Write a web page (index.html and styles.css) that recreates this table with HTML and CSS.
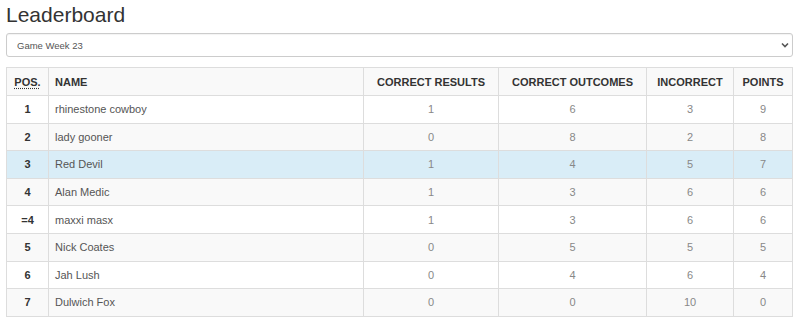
FILE: index.html
```html
<!DOCTYPE html>
<html>
<head>
<meta charset="utf-8">
<link rel="stylesheet" href="styles.css">
</head>
<body>
<div class="page">
  <h1 class="title">Leaderboard</h1>
  <div class="select-wrap">
    <select class="week-select">
      <option>Game Week 23</option>
    </select>
    <svg class="chevron" width="8" height="6" viewBox="0 0 8 6"><path d="M1 1.5 L4 4.5 L7 1.5" fill="none" stroke="#555" stroke-width="1.6"/></svg>
  </div>
  <table class="board">
    <colgroup>
      <col class="c-pos"><col class="c-name"><col class="c-cr"><col class="c-co"><col class="c-inc"><col class="c-pts">
    </colgroup>
    <thead>
      <tr>
        <th class="center"><abbr title="Position">POS.</abbr></th>
        <th class="left">NAME</th>
        <th class="center">CORRECT RESULTS</th>
        <th class="center">CORRECT OUTCOMES</th>
        <th class="center">INCORRECT</th>
        <th class="center">POINTS</th>
      </tr>
    </thead>
    <tbody>
      <tr><td class="pos">1</td><td class="name">rhinestone cowboy</td><td class="num">1</td><td class="num">6</td><td class="num">3</td><td class="num">9</td></tr>
      <tr class="alt"><td class="pos">2</td><td class="name">lady gooner</td><td class="num">0</td><td class="num">8</td><td class="num">2</td><td class="num">8</td></tr>
      <tr class="info"><td class="pos">3</td><td class="name">Red Devil</td><td class="num">1</td><td class="num">4</td><td class="num">5</td><td class="num">7</td></tr>
      <tr class="alt"><td class="pos">4</td><td class="name">Alan Medic</td><td class="num">1</td><td class="num">3</td><td class="num">6</td><td class="num">6</td></tr>
      <tr><td class="pos">=4</td><td class="name">maxxi masx</td><td class="num">1</td><td class="num">3</td><td class="num">6</td><td class="num">6</td></tr>
      <tr class="alt"><td class="pos">5</td><td class="name">Nick Coates</td><td class="num">0</td><td class="num">5</td><td class="num">5</td><td class="num">5</td></tr>
      <tr><td class="pos">6</td><td class="name">Jah Lush</td><td class="num">0</td><td class="num">4</td><td class="num">6</td><td class="num">4</td></tr>
      <tr class="alt"><td class="pos">7</td><td class="name">Dulwich Fox</td><td class="num">0</td><td class="num">0</td><td class="num">10</td><td class="num">0</td></tr>
    </tbody>
  </table>
</div>
</body>
</html>
```
FILE: styles.css
```css
html, body {
  margin: 0;
  padding: 0;
  background: #fff;
}
body {
  font-family: "Liberation Sans", Arial, sans-serif;
  color: #333;
}
.page {
  padding: 0 7px 0 6px;
}
.title {
  margin: 3px 0 0 0;
  font-size: 21px;
  line-height: 24px;
  font-weight: normal;
  color: #333;
}
.select-wrap {
  position: relative;
  margin-top: 6px;
}
.week-select {
  display: block;
  width: 100%;
  height: 24px;
  box-sizing: border-box;
  -webkit-appearance: none;
  appearance: none;
  border: 1px solid #ccc;
  border-radius: 3px;
  background: #fff;
  font-family: "Liberation Sans", Arial, sans-serif;
  font-size: 9.5px;
  color: #555;
  padding: 0 10px;
  box-shadow: inset 0 1px 1px rgba(0,0,0,0.05);
}
.chevron {
  position: absolute;
  right: 4px;
  top: 9px;
}
.board {
  margin-top: 10px;
  width: 100%;
  border-collapse: collapse;
  table-layout: fixed;
  font-size: 11px;
}
.c-pos { width: 42px; }
.c-name { width: 315px; }
.c-cr { width: 135px; }
.c-co { width: 148px; }
.c-inc { width: 87px; }
.c-pts { width: auto; }
.board th, .board td {
  border: 1px solid #ddd;
  padding: 0 6px;
  height: 26.6px;
  white-space: nowrap;
}
.board th {
  height: 27px;
  background: #f9f9f9;
  font-weight: bold;
  color: #333;
}
.board abbr {
  text-decoration: underline dotted;
  text-underline-offset: 2px;
  cursor: help;
}
.center { text-align: center; }
.left { text-align: left; }
.board tr.alt td { background: #f9f9f9; }
.board tr.info td { background: #d9edf7; }
.pos {
  text-align: center;
  font-weight: bold;
  color: #333;
}
.name {
  color: #555;
}
.num {
  text-align: center;
  color: #888;
}
```
